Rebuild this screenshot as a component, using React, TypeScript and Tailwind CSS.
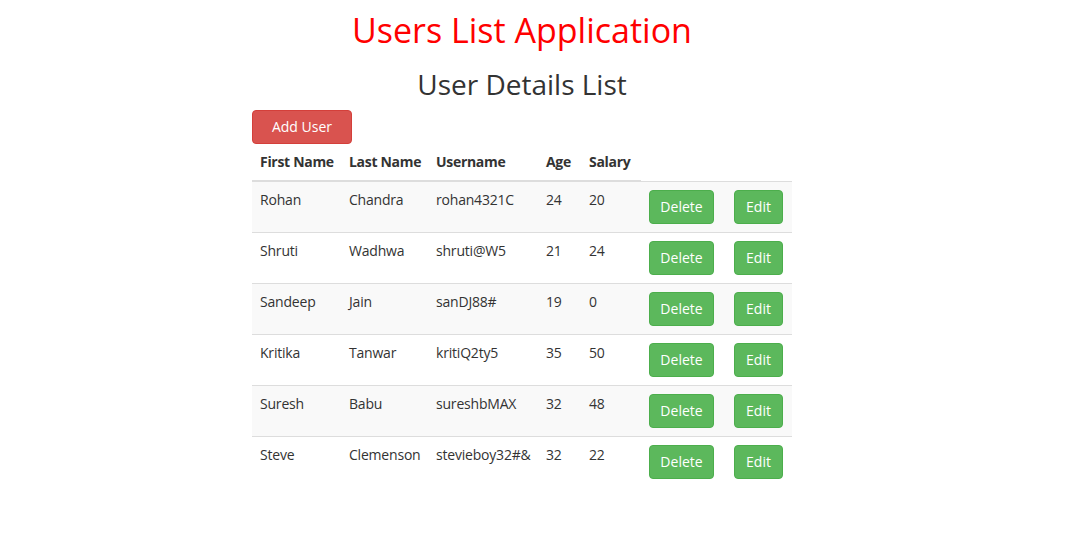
import React from "react";

const users = [
  ["Rohan", "Chandra", "rohan4321C", "24", "20"],
  ["Shruti", "Wadhwa", "shruti@W5", "21", "24"],
  ["Sandeep", "Jain", "sanDJ88#", "19", "0"],
  ["Kritika", "Tanwar", "kritiQ2ty5", "35", "50"],
  ["Suresh", "Babu", "sureshbMAX", "32", "48"],
  ["Steve", "Clemenson", "stevieboy32#&", "32", "22"],
];

export default function App() {
  return (
    <div
      className="min-h-[555px] bg-white text-[14px] leading-[20px] text-[#333]"
      style={{ fontFamily: '"Open Sans", "Noto Sans", sans-serif' }}
    >
      <div className="ml-[252px] w-[540px]">
        <h1 className="pt-[8px] text-center text-[34px] leading-[44px] text-[#ff0000]">
          Users List Application
        </h1>
        <h2 className="mt-[14px] text-center text-[28px] leading-[36px] text-[#333]">
          User Details List
        </h2>
        <button className="mt-[8px] block h-[34px] w-[100px] rounded-[4px] border border-[#d43f3a] bg-[#d9534f] text-[14px] text-white">
          Add User
        </button>
        <table className="w-[540px] table-fixed border-collapse">
          <colgroup>
            <col className="w-[89px]" />
            <col className="w-[87px]" />
            <col className="w-[110px]" />
            <col className="w-[43px]" />
            <col className="w-[60px]" />
            <col className="w-[85px]" />
            <col className="w-[66px]" />
          </colgroup>
          <thead>
            <tr>
              {["First Name", "Last Name", "Username", "Age", "Salary"].map((h) => (
                <th
                  key={h}
                  className="border-b-2 border-[#ddd] p-[8px] text-left align-bottom font-bold whitespace-nowrap tracking-[-0.3px]"
                >
                  {h}
                </th>
              ))}
            </tr>
          </thead>
          <tbody>
            {users.map((u, i) => (
              <tr key={i} className={i % 2 === 0 ? "bg-[#f9f9f9]" : "bg-white"}>
                {u.map((c, j) => (
                  <td key={j} className="border-t border-[#ddd] p-[8px] align-top whitespace-nowrap tracking-[-0.2px]">
                    {c}
                  </td>
                ))}
                <td className="border-t border-[#ddd] p-[8px] align-top">
                  <button className="h-[34px] w-[65px] rounded-[4px] border border-[#4cae4c] bg-[#5cb85c] text-[14px] text-white">
                    Delete
                  </button>
                </td>
                <td className="border-t border-[#ddd] p-[8px] align-top">
                  <button className="h-[34px] w-[49px] rounded-[4px] border border-[#4cae4c] bg-[#5cb85c] text-[14px] text-white">
                    Edit
                  </button>
                </td>
              </tr>
            ))}
          </tbody>
        </table>
      </div>
    </div>
  );
}
